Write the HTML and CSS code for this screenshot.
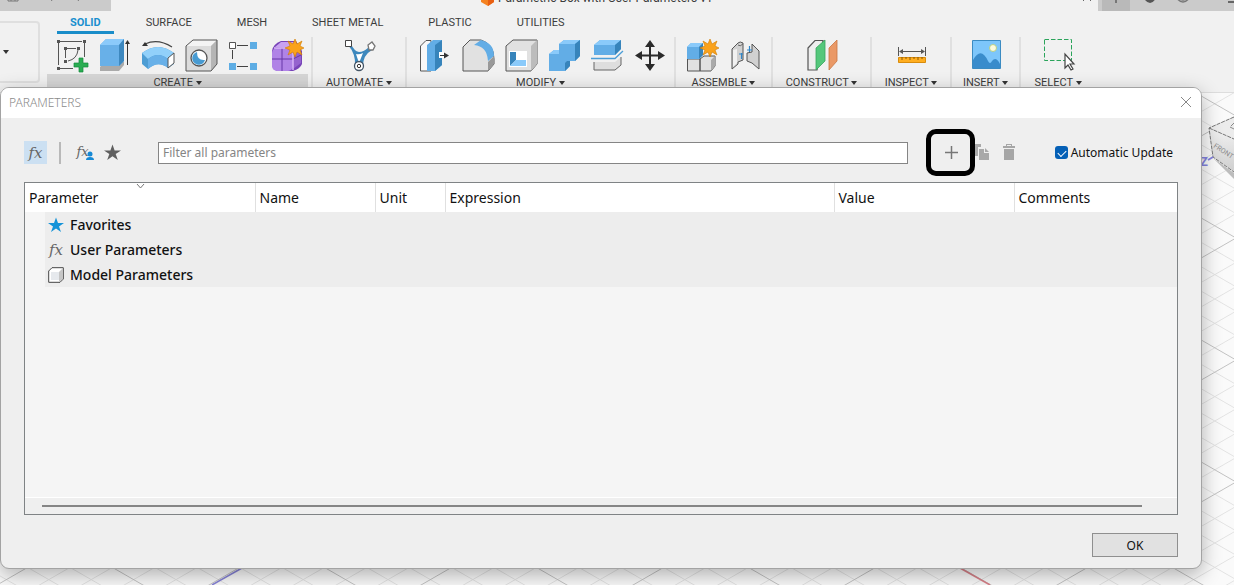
FILE: index.html
```html
<!DOCTYPE html>
<html lang="en">
<head>
<meta charset="utf-8">
<title>Parametric Box with User Parameters</title>
<link rel="stylesheet" href="styles.css">
</head>
<body>
<svg class="viewport" width="1234" height="585" aria-hidden="true">
  <defs>
    <pattern id="grid" x="1236" y="238" width="212" height="122" patternUnits="userSpaceOnUse">
      <g stroke="#e3e3e3" stroke-width="1" fill="none">
        <path d="M0-97.6L212 24.4M0-73.2L212 48.8M0-48.8L212 73.2M0-24.4L212 97.6M0 24.4L212 146.4M0 48.8L212 170.8M0 73.2L212 195.2M0 97.6L212 219.6"/>
        <path d="M0 24.4L212-97.6M0 48.8L212-73.2M0 73.2L212-48.8M0 97.6L212-24.4M0 146.4L212 24.4M0 170.8L212 48.8M0 195.2L212 73.2M0 219.6L212 97.6"/>
      </g>
      <path d="M0 0L212 122M0 122L212 0" stroke="#c2c2c2" fill="none"/>
    </pattern>
    <linearGradient id="cubeFront" x1="0" y1="0" x2="0" y2="1"><stop offset="0" stop-color="#f1f1f1"/><stop offset="1" stop-color="#cfcfcf"/></linearGradient>
  </defs>
  <rect width="1234" height="585" fill="url(#grid)"/>
  <path d="M242 568L212 585" stroke="#8683d6" stroke-width="1.5"/>
  <path d="M960 568L990 585" stroke="#d98088" stroke-width="1.5"/>
  <path d="M1213 158L1234 173V179Z" fill="#bdbdbd"/>
  <path d="M1209 128L1234 117V139Z" fill="#ececec"/>
  <path d="M1209 128L1234 139V172L1213 157Z" fill="url(#cubeFront)"/>
  <path d="M1234 117L1209 128L1213 157L1234 172M1209 128L1234 139" fill="none" stroke="#777" stroke-dasharray="4 1"/>
  <path d="M1231 126L1234 123M1230 127L1234 129" stroke="#888"/>
  <text class="cube-face" transform="translate(1213 147) rotate(33)">FRONT</text>
  <text class="axis" x="1200" y="166">Z</text>
  <path d="M1208 160L1213 157" stroke="#8583de" stroke-width="2"/>
</svg>

<header class="app-header">
  <div class="titlebar">
    <div class="quick-bar">
      <svg width="80" height="11" viewBox="0 0 80 11" fill="none"><path d="M1-2V1H11V-2M4-2V1M8-2V1" stroke="#777"/><path d="M43-2L45 1M73-2L71 1" stroke="#777"/></svg>
    </div>
    <div class="doc-tab">
      <svg width="16" height="11" viewBox="0 0 16 11"><path d="M1-3H14V2L8 6L1 2Z" fill="#f58220"/><path d="M8-3H14V2L8 6Z" fill="#e85f12"/></svg>
      <span class="doc-name">Parametric Box with User Parameters v1*</span>
    </div>
    <svg class="tab-close" width="10" height="11" viewBox="0 0 10 11"><path d="M1 1L4-2M9 1L6-2" stroke="#666"/></svg>
    <div class="system-bar">
      <div class="new-tab"><svg width="28" height="11" viewBox="0 0 28 11"><path d="M14-3V3" stroke="#777" stroke-width="2"/></svg></div>
      <svg width="104" height="11" viewBox="0 0 104 11" fill="none"><path d="M15 0Q21 7 26-2" fill="#555"/><path d="M46-3Q53 7 60-3M49-2Q53 2 57-2" stroke="#777" stroke-width="1.5"/><path d="M98 2H104" stroke="#666" stroke-width="2"/></svg>
    </div>
  </div>
  <div class="ribbon">
    <button class="workspace" aria-label="Change workspace"><span class="caret"></span></button>
    <div class="ribbon-main">
      <nav class="tabs">
        <a class="tab active" href="#">SOLID</a><a class="tab" href="#">SURFACE</a><a class="tab" href="#">MESH</a><a class="tab" href="#">SHEET METAL</a><a class="tab" href="#">PLASTIC</a><a class="tab" href="#">UTILITIES</a>
      </nav>
      <div class="groups">
        <section class="group create">
          <div class="tools">
            <button aria-label="Create sketch"><svg width="34" height="34" viewBox="0 0 34 34" fill="none"><path d="M4 2.500H26M2.500 4V26M28.500 4V18M4 29.500H17M9.500 11V19M11 9.500H20M22 11Q21 20 12 22" stroke="#555"/><path d="M1 1h3v3H1zM27 1h3v3h-3zM1 28h3v3H1zM8 8h3v3H8zM21 8h3v3h-3zM8 21h3v3H8z" fill="#555"/><path d="M23 19h4v5h5v4h-5v5h-4v-5h-5v-4h5z" fill="#2aad52" stroke="#168a3c" stroke-width=".7"/></svg></button>
            <button aria-label="Extrude"><svg width="34" height="34" viewBox="0 0 34 34"><path d="M1 28L6 23H25V26L20 32H1Z" fill="#aaa"/><path d="M1 6L7 0H25V22L20 27H1Z" fill="#68b0e8"/><path d="M1 6L7 0H25L20 6Z" fill="#8bcafa"/><path d="M20 6L25 0V22L20 27Z" fill="#3d88bf"/><path d="M28.500 26V4" stroke="#333"/><path d="M26 5L28.500 1L31 5Z" fill="#333"/></svg></button>
            <button aria-label="Revolve"><svg width="34" height="34" viewBox="0 0 34 34"><path d="M0 14Q16 2 32 14V25L26 29Q16 21 6 30L0 25Z" fill="#4d9dd4"/><path d="M0 14Q16 2 32 14L26 20Q16 12 6 20Z" fill="#91d0fa"/><path d="M6 20Q16 12 26 20V29Q16 21 6 30Z" fill="#68b0e8"/><path d="M26 19L32 14V24L26 29Z" fill="#fff" stroke="#555"/><path d="M3 5Q16-1 30 8" fill="none" stroke="#444" stroke-width="1.2"/><path d="M0 7L3 3L6 7Z" fill="#333"/></svg></button>
            <button aria-label="Hole"><svg width="34" height="34" viewBox="0 0 34 34"><path d="M1 7L8 1H32V25L26 32H1Z" fill="#dcdcdc"/><path d="M1 7L8 1H32L26 7Z" fill="#f4f4f4"/><path d="M26 7L32 1V25L26 32Z" fill="#b5b5b5"/><path d="M1 7L8 1H32V25L26 32H1Z" fill="none" stroke="#555"/><circle cx="14" cy="19" r="8" fill="#fff" stroke="#555" stroke-width="1.3"/><path d="M12 13A6.500 6.500 0 1 0 20 21Q12 22 12 13Z" fill="#489bd2"/></svg></button>
            <button aria-label="Rectangular pattern"><svg width="34" height="34" viewBox="0 0 34 34"><path d="M9 6.500H20M4.500 11V20M9 27.500H20" stroke="#444"/><path d="M1.500 3.500h6v6h-6z" fill="#fff" stroke="#555"/><path d="M22 3h7v7h-7zM1 24h7v7H1zM22 24h7v7h-7z" fill="#5eade4"/></svg></button>
            <button aria-label="Create form"><svg width="34" height="34" viewBox="0 0 34 34"><path d="M1 12Q2 5 10 2H25L31 12V25Q29 30 22 32H6Q1 30 1 25Z" fill="#7844b8"/><path d="M4 8L10 3H24L20 9Z" fill="#c9a2f2"/><rect x="1" y="9" width="21" height="23" rx="5" fill="#b083e6"/><path d="M22 12L30 9V24L22 30Z" fill="#9563ce"/><path d="M11 9V32M1 20H22L30 16" stroke="#6737a8" fill="none"/><path d="M3 9H22V31" stroke="#d7b7f7" stroke-width="1.5" fill="none"/><path d="M24 0l2 5 5-3-2 5 4 2-4 2 2 5-5-3-2 5-2-5-5 3 2-5-5-2 5-2-2-5 5 3z" fill="#faa21b" stroke="#cf7a00" stroke-width=".6"/></svg></button>
          </div>
          <button class="group-label">CREATE <span class="caret"></span></button>
        </section>
        <section class="group automate">
          <div class="tools">
            <button aria-label="Automated modeling"><svg width="34" height="34" viewBox="0 0 34 34"><path d="M5 6Q13 15 12 27A4 4 0 0 0 20 27Q20 16 29 11L26 8Q21 13 16 13Q11 12 8 5Z" fill="#3d88bd"/><path d="M13 15Q16 16 20 14L16 24Z" fill="#fff"/><path d="M2.500 1.500h6v6h-6z" fill="#fff" stroke="#444"/><path d="M25 6L29 3L32 7L30 11L26 11Z" fill="#fff" stroke="#777" stroke-width="1.3"/><circle cx="16" cy="27" r="4.500" fill="#fff" stroke="#456" stroke-width="1.300"/><circle cx="16" cy="27" r="1.700" fill="#fff" stroke="#333"/></svg></button>
          </div>
          <button class="group-label">AUTOMATE <span class="caret"></span></button>
        </section>
        <section class="group modify">
          <div class="tools">
            <button aria-label="Press pull"><svg width="34" height="34" viewBox="0 0 34 34"><path d="M1.500 7L7 1.500H12V32H1.500Z" fill="#f8f8f8" stroke="#555"/><path d="M8 6L14 1H23V26L16 32H8Z" fill="#62ade6"/><path d="M16 6L23 1V26L16 32Z" fill="#3784bb"/><path d="M20 13H25V19H20Z" fill="#fff"/><path d="M21 16.500H27" stroke="#333"/><path d="M25 13.500L30 16.500L25 19.500Z" fill="#333"/></svg></button>
            <button aria-label="Fillet"><svg width="34" height="34" viewBox="0 0 34 34"><path d="M1 8L8 1H19Q32 5 32 20V25L26 32H1Z" fill="#e1e1e1" stroke="#555"/><path d="M12 6L19 1Q32 4 32 17L26 22Q25 7 12 6Z" fill="#62ade6"/><path d="M26 23L32 17V25L26 32Z" fill="#999"/></svg></button>
            <button aria-label="Shell"><svg width="34" height="34" viewBox="0 0 34 34"><path d="M1 7L8 1H32V25L26 32H1Z" fill="#e1e1e1" stroke="#555"/><path d="M26 7L32 1V25L26 32Z" fill="#bcbcbc"/><path d="M4 12H22V28H4Z" fill="#fff"/><path d="M5 13H11V21L5 27Z" fill="#3784bb"/><path d="M5 27L11 21H21V27Z" fill="#8acafa"/></svg></button>
            <button aria-label="Combine"><svg width="34" height="34" viewBox="0 0 34 34"><path d="M1 15L6 11H11V5L16 1H32V17L27 22H22V27L17 32H1Z" fill="#62ade6"/><path d="M11 5L16 1H32L27 5ZM1 15L6 11H11V15Z" fill="#8acafa"/><path d="M27 5L32 1V17L27 22ZM17 24L19 22H22V27L17 32Z" fill="#3784bb"/></svg></button>
            <button aria-label="Split body"><svg width="34" height="34" viewBox="0 0 34 34"><path d="M3 6L9 1H30V10L24 16H3Z" fill="#62ade6"/><path d="M3 6L9 1H30L24 6Z" fill="#8acafa"/><path d="M24 6L30 1V10L24 16Z" fill="#3784bb"/><path d="M0 19.500H24L32 12" fill="none" stroke="#4b9dd7" stroke-width="1.3"/><path d="M3 23H24L30 18V26L24 31H3Z" fill="#dedede"/><path d="M3 23V31H24L30 26V18" fill="none" stroke="#666"/></svg></button>
            <button aria-label="Move"><svg width="34" height="34" viewBox="0 0 34 34"><path d="M16 5V28M5 16.500H28" stroke="#2b2b2b" stroke-width="2"/><path d="M16 1L21 8H11ZM16 32L11 25H21ZM1 16.500L8 12V21ZM31 16.500L24 12V21Z" fill="#2b2b2b"/></svg></button>
          </div>
          <button class="group-label">MODIFY <span class="caret"></span></button>
        </section>
        <section class="group assemble">
          <div class="tools">
            <button aria-label="New component"><svg width="34" height="34" viewBox="0 0 34 34"><path d="M1.500 20H14V32H1.500ZM14 20L18 17H29V27L25 32H14Z" fill="#e1e1e1" stroke="#555"/><path d="M25 21L29 17V27L25 32Z" fill="#aaa"/><path d="M1 8L5 4H17V16L13 20H1Z" fill="#62ade6"/><path d="M1 8L5 4H17L13 8Z" fill="#8acafa"/><path d="M13 8L17 4V16L13 20Z" fill="#3784bb"/><path d="M24 0l2 5 5-3-2 5 4 2-4 2 2 5-5-3-2 5-2-5-5 3 2-5-5-2 5-2-2-5 5 3z" fill="#faa21b" stroke="#cf7a00" stroke-width=".6"/></svg></button>
            <button aria-label="Joint"><svg width="34" height="34" viewBox="0 0 34 34"><path d="M3 10L9 4Q11 2 14 4V21L9 23V25L3 30Z" fill="#d1d1d1" stroke="#555"/><path d="M18 14L23 13V5L30 12V30L23 24L18 22Z" fill="#d1d1d1" stroke="#555"/><path d="M8 10V24L4 28V11Z" fill="#f1f1f1"/><path d="M9 6Q11 8 14 5" fill="none" stroke="#666"/><path d="M12.500 14V20M10 15H14M20.500 7V13M18 11H23" stroke="#3086c8" stroke-width="1.2"/></svg></button>
          </div>
          <button class="group-label">ASSEMBLE <span class="caret"></span></button>
        </section>
        <section class="group construct">
          <div class="tools">
            <button aria-label="Offset plane"><svg width="34" height="34" viewBox="0 0 34 34"><path d="M2 9L9 1.500H17L11 31H2Z" fill="#eee" stroke="#555" stroke-width="1.2"/><path d="M10 9L19 1V22L10 31Z" fill="#54c77b" stroke="#39a45e" stroke-width=".8"/><path d="M23 9L31 1V22L23 31Z" fill="#ea9966" stroke="#c97745" stroke-width=".8"/></svg></button>
          </div>
          <button class="group-label">CONSTRUCT <span class="caret"></span></button>
        </section>
        <section class="group inspect">
          <div class="tools">
            <button aria-label="Measure"><svg width="34" height="34" viewBox="0 0 34 34"><path d="M3.500 8V17M30.500 8V17M6 12.500H28" stroke="#555"/><path d="M4 12.500L8 10V15ZM30 12.500L26 10V15Z" fill="#555"/><path d="M3.500 18.500H30.500V23.500H3.500Z" fill="#ffae20" stroke="#d98c0c"/><path d="M7 18V21M11 18V20M15 18V21M19 18V20M23 18V21M27 18V20" stroke="#704700" stroke-width=".8"/></svg></button>
          </div>
          <button class="group-label">INSPECT <span class="caret"></span></button>
        </section>
        <section class="group insert">
          <div class="tools">
            <button aria-label="Insert image"><svg width="34" height="34" viewBox="0 0 34 34"><path d="M2.500 1.500h28v28h-28z" fill="#7dc6fb" stroke="#3b8bc2"/><circle cx="23" cy="9" r="3.500" fill="#fbfadd" stroke="#b6cf86"/><path d="M3 21Q11 7 18 22Q20 26 22 22Q26 17 30 25V29H3Z" fill="#398ccc"/></svg></button>
          </div>
          <button class="group-label">INSERT <span class="caret"></span></button>
        </section>
        <section class="group select">
          <div class="tools">
            <button aria-label="Select"><svg width="34" height="34" viewBox="0 0 34 34"><path d="M2.500 .5H29.500V21.500H2.500Z" fill="none" stroke="#2ba45b" stroke-dasharray="4.500 2"/><path d="M23 15V29L26 26L29 31L31 30L28 25H32Z" fill="#fff" stroke="#444" stroke-width="1.200"/></svg></button>
          </div>
          <button class="group-label">SELECT <span class="caret"></span></button>
        </section>
      </div>
    </div>
  </div>
</header>

<main class="dialog" role="dialog" aria-labelledby="dialog-title">
  <div class="dialog-title">
    <h1 id="dialog-title">PARAMETERS</h1>
    <button class="icon-button" aria-label="Close"><svg width="12" height="12" viewBox="0 0 12 12"><path d="M1 1L11 11M11 1L1 11" stroke="#888"/></svg></button>
  </div>
  <div class="dialog-body">
    <div class="toolbar">
      <button class="icon-button pressed fx" aria-label="All parameters">fx</button>
      <span class="divider"></span>
      <button class="icon-button fx user-fx" aria-label="User parameters">fx<svg class="person" width="10" height="10" viewBox="0 0 10 10"><circle cx="5" cy="3" r="2.500" fill="#1689d5"/><path d="M1 9Q1 6 5 6Q9 6 9 9Z" fill="#1689d5"/></svg></button>
      <button class="icon-button" aria-label="Favorites"><svg width="17" height="17" viewBox="0 0 16 16"><path d="M8 .5L10 6H16L11 9.500L13 15L8 11.500L3 15L5 9.500L0 6H6Z" fill="#5f5f5f"/></svg></button>
      <input class="filter" type="text" placeholder="Filter all parameters" aria-label="Filter all parameters">
      <div class="actions">
        <button class="icon-button add" aria-label="Add parameter"><svg width="13" height="13" viewBox="0 0 13 13"><path d="M6.500 0V13M0 6.500H13" stroke="#777" stroke-width="1.500"/></svg></button>
        <button class="icon-button" aria-label="Copy"><svg width="17" height="17" viewBox="0 0 17 17"><path d="M2 0H9V3H6V12H2Z" fill="#a9a9a9"/><path d="M7 5H12V9H17V16H7Z" fill="#a9a9a9"/><path d="M13 4L17 8H13Z" fill="#a9a9a9"/></svg></button>
        <button class="icon-button" aria-label="Delete"><svg width="12" height="17" viewBox="0 0 12 17"><path d="M0 2H3V0H9V2H12V4H0ZM4 1V2H8V1Z" fill="#a6a6a6" fill-rule="evenodd"/><path d="M1 5H11V16H1Z" fill="#a6a6a6"/></svg></button>
      </div>
      <label class="auto-update"><input type="checkbox" checked>Automatic Update</label>
    </div>
    <div class="table-frame">
      <table>
        <colgroup><col class="c-parameter"><col class="c-name"><col class="c-unit"><col class="c-expression"><col class="c-value"><col class="c-comments"></colgroup>
        <thead>
          <tr><th>Parameter<svg class="sort" width="9" height="5" viewBox="0 0 9 5"><path d="M1 0L4.500 4L8 0" fill="none" stroke="#777"/></svg></th><th>Name</th><th>Unit</th><th>Expression</th><th>Value</th><th>Comments</th></tr>
        </thead>
        <tbody>
          <tr><td colspan="6"><div class="row"><svg width="16" height="16" viewBox="0 0 16 16"><path d="M8 .5L10 6H16L11 9.500L13 15L8 11.500L3 15L5 9.500L0 6H6Z" fill="#1593d8"/></svg>Favorites</div></td></tr>
          <tr><td colspan="6"><div class="row"><span class="fx row-fx" aria-hidden="true">fx</span>User Parameters</div></td></tr>
          <tr><td colspan="6"><div class="row"><svg width="16" height="16" viewBox="0 0 16 16"><path d="M.7 4L4 .7H15.300V12L12 15.300H.7Z" fill="#fff" stroke="#444"/><path d="M11 5L15 1V12L11 15Z" fill="#c6c6c6"/><path d="M3 5H11V13H3Z" fill="#e6e9ed"/></svg>Model Parameters</div></td></tr>
        </tbody>
      </table>
      <div class="scroll"><div class="thumb"></div></div>
    </div>
    <div class="footer"><button class="ok">OK</button></div>
  </div>
</main>
</body>
</html>
```
FILE: styles.css
```css
* { box-sizing: border-box; }

body {
  margin: 0;
  position: relative;
  min-height: 100vh;
  overflow: hidden;
  background: #fafafa;
  color: #111;
  font-family: "Noto Sans", "Open Sans", sans-serif;
}

button {
  margin: 0;
  padding: 0;
  border: 0;
  background: none;
  color: inherit;
  font: inherit;
}

svg { display: block; flex: none; }

.viewport { position: absolute; top: 0; left: 0; }
.cube-face { font: 7px "Roboto", sans-serif; fill: #8c8c8c; }
.axis { font: bold 13px "Roboto", sans-serif; fill: #8583de; }

/* Application header */
.app-header {
  position: relative;
  height: 93px;
  background: #f1f1f1;
  border-bottom: 1px solid #ddd;
  color: #3c3c3c;
  font-family: "Roboto", "Liberation Sans", sans-serif;
  font-size: 11px;
}

.titlebar { display: flex; height: 11px; overflow: hidden; }
.quick-bar { width: 111px; padding-left: 7px; background: #cbcbcb; }
.doc-tab {
  display: flex;
  flex: 1;
  align-items: flex-end;
  justify-content: center;
  gap: 2px;
  padding-left: 5px;
}
.doc-name { padding-bottom: 5px; font-size: 12px; line-height: 16px; }
.tab-close { margin-right: 6px; }
.system-bar { display: flex; width: 136px; padding-left: 4px; background: #cbcbcb; overflow: hidden; }
.new-tab { background: #b9b9b9; }

.ribbon { display: flex; }
.workspace {
  display: flex;
  align-items: center;
  width: 40px;
  height: 62px;
  margin-top: 10px;
  padding-left: 3px;
  border: 2px solid #dfdfdf;
  border-left: 0;
  border-radius: 0 4px 4px 0;
}
.caret {
  display: inline-block;
  border: 3px solid transparent;
  border-top: 4px solid #333;
  border-bottom: 0;
  vertical-align: middle;
}

.tabs { display: flex; gap: 19px; padding-left: 17px; }
.tab {
  height: 23px;
  padding: 0 13px;
  border-bottom: 3px solid transparent;
  color: inherit;
  line-height: 23px;
  text-decoration: none;
}
.tab.active { border-color: #1a8dc9; color: #1a8fcf; font-weight: 700; }

.groups { display: flex; padding: 3px 0 0 7px; }
.group {
  display: flex;
  flex-direction: column;
  border-right: 2px solid #e0e0e0;
}
.tools { display: flex; justify-content: center; gap: 9px; height: 37px; padding-left: 2px; }
.group-label { height: 18px; line-height: 18px; white-space: nowrap; }
.create { width: 266px; padding-right: 3px; }
.create .tools { padding-left: 5px; }
.create .group-label { background: #d5d5d5; }
.automate { width: 94px; }
.modify { width: 269px; }
.modify .tools { padding-left: 5px; }
.assemble { width: 97px; }
.construct { width: 99px; }
.inspect { width: 80px; }
.insert { width: 69px; }
.select { width: 74px; border-right: 0; }

/* Parameters dialog */
.dialog {
  position: absolute;
  top: 87px;
  right: 32px;
  bottom: 16px;
  left: 0;
  display: flex;
  flex-direction: column;
  overflow: hidden;
  border: 1px solid #a3a3a3;
  border-radius: 9px;
  background: #efefef;
  box-shadow: 0 6px 20px rgba(0, 0, 0, 0.3);
}
.dialog-title {
  display: flex;
  align-items: center;
  justify-content: space-between;
  height: 30px;
  padding: 0 4px 2px 8px;
  background: #fff;
}
.dialog-title h1 { margin: 0; color: #8a8a8a; font-size: 12px; font-weight: 300; }
.dialog-body {
  display: flex;
  flex: 1;
  flex-direction: column;
  padding: 23px 23px 11px;
}

.toolbar { display: flex; align-items: center; padding-right: 5px; }
.icon-button {
  display: flex;
  align-items: center;
  justify-content: center;
  width: 23px;
  height: 23px;
}
.pressed { background: #cce0f2; }
.fx {
  color: #666;
  font-family: "DejaVu Serif", serif;
  font-size: 15px;
  font-style: italic;
}
.divider { width: 2px; height: 22px; margin: 0 13px 0 12px; background: #b9b9b9; }
.user-fx { position: relative; margin-right: 4px; padding: 0 6px 3px 0; font-size: 13px; }
.person { position: absolute; right: 2px; bottom: 3px; }
.filter {
  flex: 1;
  min-width: 0;
  height: 22px;
  margin: 0 32px 0 34px;
  padding: 0 4px;
  border: 1px solid #858585;
  background: #fff;
  font: 12px "Noto Sans", sans-serif;
}
.filter::placeholder { color: #858585; opacity: 1; }
.actions { display: flex; gap: 6px; }
.add { position: relative; }
.add::after {
  content: "";
  position: absolute;
  inset: -12px -12px -12px -14px;
  z-index: 1;
  border: 5px solid #000;
  border-radius: 10px;
}
.auto-update {
  display: flex;
  align-items: center;
  gap: 3px;
  margin-left: 34px;
  font-size: 12px;
}
.auto-update input {
  appearance: none;
  width: 13px;
  height: 13px;
  margin: 0;
  border-radius: 3px;
  background: #0560b6;
}
.auto-update input:checked::before {
  content: "";
  display: block;
  width: 7px;
  height: 4px;
  margin: 4px 3px;
  border: solid #fff;
  border-width: 0 0 1px 1px;
  transform: rotate(-45deg);
}

.table-frame {
  display: flex;
  flex: 1;
  flex-direction: column;
  margin-top: 18px;
  border: 1px solid #7f8385;
  background: #f5f5f5;
}
table { width: 100%; border-collapse: collapse; table-layout: fixed; font-size: 14px; }
.c-parameter { width: 230px; }
.c-name { width: 120px; }
.c-unit { width: 70px; }
.c-value { width: 180px; }
.c-comments { width: 163px; }
th {
  position: relative;
  height: 29px;
  padding: 0 4px;
  border-right: 1px solid #e0e0e0;
  background: #fff;
  font-weight: 400;
  text-align: left;
}
th:last-child { border-right: 0; }
.sort { position: absolute; top: 1px; left: calc(50% - 4px); }
td { padding: 0 0 0 20px; font-weight: 500; }
.row { display: flex; align-items: center; gap: 6px; height: 25px; padding-left: 3px; background: #ededed; }
.row-fx { width: 16px; line-height: 20px; text-align: center; font-weight: 400; }
.scroll {
  display: flex;
  align-items: center;
  height: 17px;
  margin-top: auto;
  padding: 0 35px 0 17px;
  border-top: 1px solid #fff;
  background: #efefef;
}
.thumb { flex: 1; height: 2px; background: #858585; }

.footer { display: flex; justify-content: flex-end; margin-top: 18px; }
.ok {
  width: 86px;
  height: 24px;
  border: 1px solid #8f8f8f;
  background: #e1e1e1;
  font-size: 12px;
}
```
